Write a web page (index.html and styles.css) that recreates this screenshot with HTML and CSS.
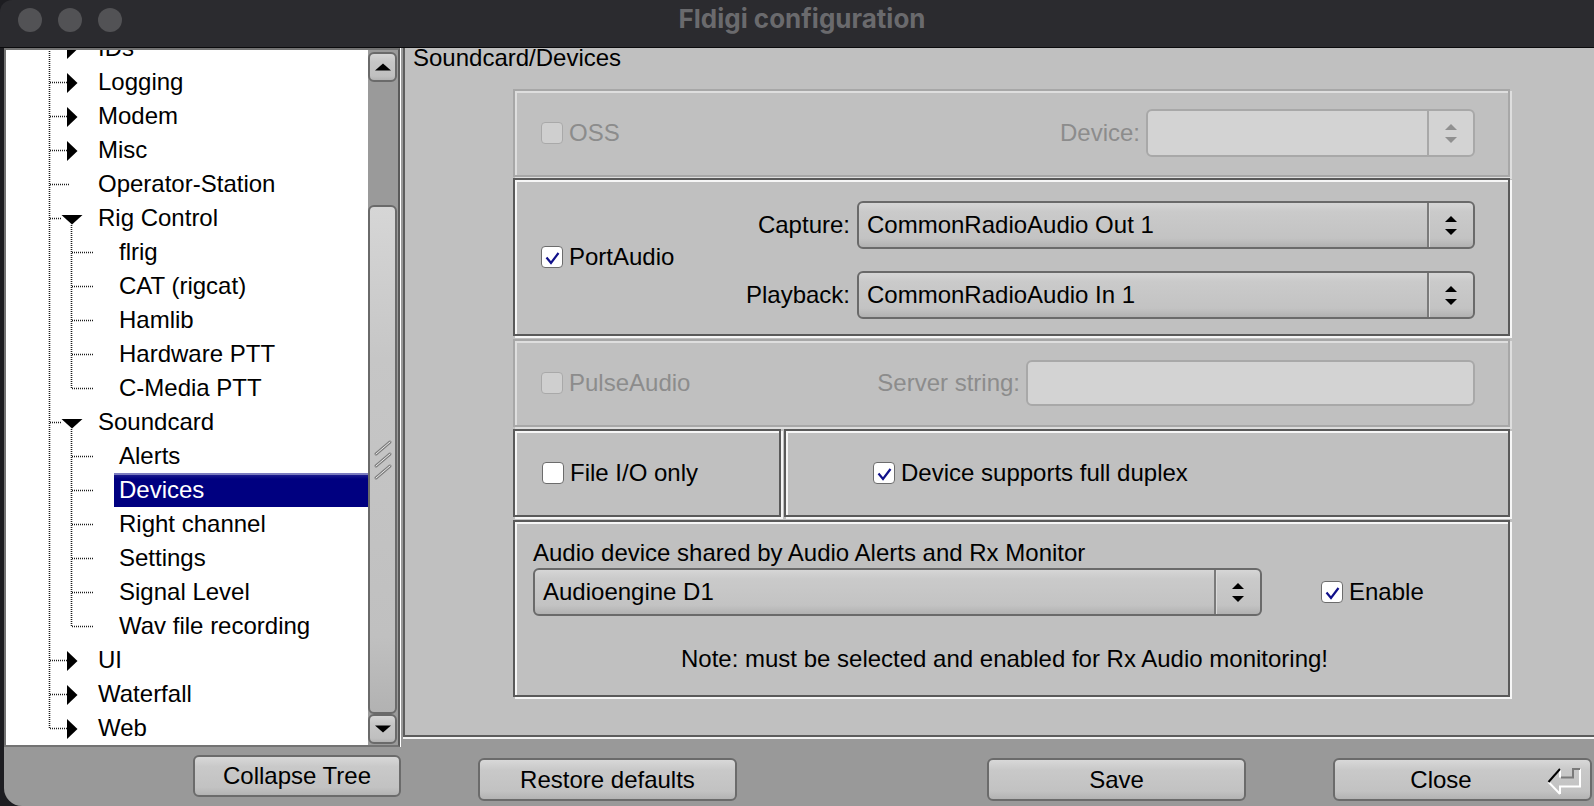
FILE: index.html
```html
<!DOCTYPE html>
<html lang="en">
<head>
    <meta charset="UTF-8">
    <title>Fldigi configuration</title>
    <link rel="stylesheet" href="styles.css">
</head>
<body>
<div class="window">
    <div class="titlebar">
        <div class="lights"><span></span><span></span><span></span></div>
        <div class="title">Fldigi configuration</div>
    </div>

    <div class="client">
        <!-- settings tree -->
        <div class="left-col">
            <div class="tree-box">
                <div class="tree-view">
                    <div class="tree-list">
                        <div class="node"><svg class="gut l1"><use href="#n-closed"/></svg><span class="lbl">IDs</span></div>
                        <div class="node"><svg class="gut l1"><use href="#n-closed"/></svg><span class="lbl">Logging</span></div>
                        <div class="node"><svg class="gut l1"><use href="#n-closed"/></svg><span class="lbl">Modem</span></div>
                        <div class="node"><svg class="gut l1"><use href="#n-closed"/></svg><span class="lbl">Misc</span></div>
                        <div class="node"><svg class="gut l1"><use href="#n-leaf"/></svg><span class="lbl">Operator-Station</span></div>
                        <div class="node"><svg class="gut l1"><use href="#n-open"/></svg><span class="lbl">Rig Control</span></div>
                        <div class="node"><svg class="gut l2"><use href="#c-mid"/></svg><span class="lbl">flrig</span></div>
                        <div class="node"><svg class="gut l2"><use href="#c-mid"/></svg><span class="lbl">CAT (rigcat)</span></div>
                        <div class="node"><svg class="gut l2"><use href="#c-mid"/></svg><span class="lbl">Hamlib</span></div>
                        <div class="node"><svg class="gut l2"><use href="#c-mid"/></svg><span class="lbl">Hardware PTT</span></div>
                        <div class="node"><svg class="gut l2"><use href="#c-last"/></svg><span class="lbl">C-Media PTT</span></div>
                        <div class="node"><svg class="gut l1"><use href="#n-open"/></svg><span class="lbl">Soundcard</span></div>
                        <div class="node"><svg class="gut l2"><use href="#c-mid"/></svg><span class="lbl">Alerts</span></div>
                        <div class="node sel"><svg class="gut l2"><use href="#c-mid"/></svg><span class="lbl">Devices</span></div>
                        <div class="node"><svg class="gut l2"><use href="#c-mid"/></svg><span class="lbl">Right channel</span></div>
                        <div class="node"><svg class="gut l2"><use href="#c-mid"/></svg><span class="lbl">Settings</span></div>
                        <div class="node"><svg class="gut l2"><use href="#c-mid"/></svg><span class="lbl">Signal Level</span></div>
                        <div class="node"><svg class="gut l2"><use href="#c-last"/></svg><span class="lbl">Wav file recording</span></div>
                        <div class="node"><svg class="gut l1"><use href="#n-closed"/></svg><span class="lbl">UI</span></div>
                        <div class="node"><svg class="gut l1"><use href="#n-closed"/></svg><span class="lbl">Waterfall</span></div>
                        <div class="node"><svg class="gut l1"><use href="#n-last"/></svg><span class="lbl">Web</span></div>
                    </div>
                </div>
                <div class="scrollbar">
                    <div class="sb-btn">
                        <svg width="16" height="8" viewBox="0 0 16 8"><polygon points="0,7.5 16,7.5 8,0.5" fill="#000"/></svg>
                    </div>
                    <div class="sb-thumb">
                        <svg width="20" height="42" viewBox="0 0 20 42">
                            <g stroke="#7e7e7e" stroke-width="3" stroke-linecap="round">
                                <line x1="3" y1="15" x2="17" y2="3"/>
                                <line x1="3" y1="27" x2="17" y2="15"/>
                                <line x1="3" y1="39" x2="17" y2="27"/>
                            </g>
                            <g stroke="#ececec" stroke-width="1" stroke-linecap="round">
                                <line x1="3" y1="15" x2="17" y2="3"/>
                                <line x1="3" y1="27" x2="17" y2="15"/>
                                <line x1="3" y1="39" x2="17" y2="27"/>
                            </g>
                        </svg>
                    </div>
                    <div class="sb-btn">
                        <svg width="16" height="8" viewBox="0 0 16 8"><polygon points="0,0.5 16,0.5 8,7.5" fill="#000"/></svg>
                    </div>
                </div>
            </div>
            <div class="left-buttons">
                <button class="btn collapse">Collapse Tree</button>
            </div>
        </div>

        <!-- Soundcard/Devices page -->
        <div class="right-col">
            <div class="panel">
                <div class="panel-title">Soundcard/Devices</div>
                <div class="groups">
                    <div class="group inactive oss">
                        <label class="cbx off"><span class="cb"></span>OSS</label>
                        <div class="field">
                            <span class="field-label">Device:</span>
                            <div class="choice disabled w-oss">
                                <span class="choice-text"></span>
                                <span class="choice-arrows"><svg width="12" height="19" viewBox="0 0 12 19"><polygon points="0,6 12,6 6,0"/><polygon points="0,13 12,13 6,19"/></svg></span>
                            </div>
                        </div>
                    </div>

                    <div class="group portaudio">
                        <label class="cbx"><span class="cb"><svg viewBox="0 0 22 22"><polyline points="5.5,11.5 10,17 17.5,7"/></svg></span>PortAudio</label>
                        <div class="pa-grid">
                            <span class="field-label">Capture:</span>
                            <div class="choice">
                                <span class="choice-text">CommonRadioAudio Out 1</span>
                                <span class="choice-arrows"><svg width="12" height="19" viewBox="0 0 12 19"><polygon points="0,6 12,6 6,0"/><polygon points="0,13 12,13 6,19"/></svg></span>
                            </div>
                            <span class="field-label">Playback:</span>
                            <div class="choice">
                                <span class="choice-text">CommonRadioAudio In 1</span>
                                <span class="choice-arrows"><svg width="12" height="19" viewBox="0 0 12 19"><polygon points="0,6 12,6 6,0"/><polygon points="0,13 12,13 6,19"/></svg></span>
                            </div>
                        </div>
                    </div>

                    <div class="group inactive pulse">
                        <label class="cbx off"><span class="cb"></span>PulseAudio</label>
                        <div class="field">
                            <span class="field-label">Server string:</span>
                            <div class="input disabled"></div>
                        </div>
                    </div>

                    <div class="fileio-row">
                        <div class="group fileio">
                            <label class="cbx"><span class="cb"></span>File I/O only</label>
                        </div>
                        <div class="group duplex">
                            <label class="cbx"><span class="cb"><svg viewBox="0 0 22 22"><polyline points="5.5,11.5 10,17 17.5,7"/></svg></span>Device supports full duplex</label>
                        </div>
                    </div>

                    <div class="group audio">
                        <div class="audio-label">Audio device shared by Audio Alerts and Rx Monitor</div>
                        <div class="audio-line">
                            <div class="choice w-audio">
                                <span class="choice-text">Audioengine D1</span>
                                <span class="choice-arrows"><svg width="12" height="19" viewBox="0 0 12 19"><polygon points="0,6 12,6 6,0"/><polygon points="0,13 12,13 6,19"/></svg></span>
                            </div>
                            <label class="cbx enable"><span class="cb"><svg viewBox="0 0 22 22"><polyline points="5.5,11.5 10,17 17.5,7"/></svg></span>Enable</label>
                        </div>
                        <div class="note">Note: must be selected and enabled for Rx Audio monitoring!</div>
                    </div>
                </div>
            </div>

            <div class="button-row">
                <button class="btn restore">Restore defaults</button>
                <button class="btn save">Save</button>
                <button class="btn close">
                    <span class="btn-text">Close</span>
                    <svg class="ret" width="34" height="30" viewBox="0 0 34 30">
                        <g fill="none" stroke-width="2">
                            <path d="M1.5 17 L13 29" stroke="#fff"/>
                            <path d="M13 29 V21.5 H33 V4" stroke="#fff"/>
                            <path d="M13 12.5 V4" stroke="#fff"/>
                            <path d="M1.5 17 L13 4" stroke="#000"/>
                            <path d="M14 12.5 H26 V4 H33" stroke="#7a7a7a"/>
                        </g>
                    </svg>
                </button>
            </div>
        </div>
    </div>
</div>

<!-- tree connector pieces, one per row type -->
<svg class="defs" width="0" height="0">
    <symbol id="n-closed">
        <g stroke="#1c1c1c" stroke-width="1.6" stroke-dasharray="1 1">
            <line x1="43.5" y1="0" x2="43.5" y2="34"/>
            <line x1="44" y1="17.5" x2="61" y2="17.5"/>
        </g>
        <polygon points="61,8 71.5,18 61,28" fill="#000"/>
    </symbol>
    <symbol id="n-last">
        <g stroke="#1c1c1c" stroke-width="1.6" stroke-dasharray="1 1">
            <line x1="43.5" y1="0" x2="43.5" y2="18"/>
            <line x1="44" y1="17.5" x2="61" y2="17.5"/>
        </g>
        <polygon points="61,8 71.5,18 61,28" fill="#000"/>
    </symbol>
    <symbol id="n-leaf">
        <g stroke="#1c1c1c" stroke-width="1.6" stroke-dasharray="1 1">
            <line x1="43.5" y1="0" x2="43.5" y2="34"/>
            <line x1="44" y1="17.5" x2="64" y2="17.5"/>
        </g>
    </symbol>
    <symbol id="n-open">
        <g stroke="#1c1c1c" stroke-width="1.6" stroke-dasharray="1 1">
            <line x1="43.5" y1="0" x2="43.5" y2="34"/>
            <line x1="44" y1="17.5" x2="56" y2="17.5"/>
            <line x1="65.5" y1="24" x2="65.5" y2="34"/>
        </g>
        <polygon points="55.5,14 76.5,14 66,23.5" fill="#000"/>
    </symbol>
    <symbol id="c-mid">
        <g stroke="#1c1c1c" stroke-width="1.6" stroke-dasharray="1 1">
            <line x1="43.5" y1="0" x2="43.5" y2="34"/>
            <line x1="65.5" y1="0" x2="65.5" y2="34"/>
            <line x1="66" y1="17.5" x2="88" y2="17.5"/>
        </g>
    </symbol>
    <symbol id="c-last">
        <g stroke="#1c1c1c" stroke-width="1.6" stroke-dasharray="1 1">
            <line x1="43.5" y1="0" x2="43.5" y2="34"/>
            <line x1="65.5" y1="0" x2="65.5" y2="18"/>
            <line x1="66" y1="17.5" x2="88" y2="17.5"/>
        </g>
    </symbol>
</svg>
</body>
</html>
```

FILE: styles.css
```css
/* Fldigi configuration dialog */
* {
    box-sizing: border-box;
}

body {
    margin: 0;
    background-color: #1d1d21;
    font-family: "Liberation Sans", Arial, sans-serif;
    font-size: 24px;
    color: #000;
    overflow: hidden;
}

.window {
    width: 1594px;
    height: 806px;
    display: flex;
    flex-direction: column;
}

/* title bar */
.titlebar {
    height: 48px;
    flex: none;
    background-color: #2b2b2f;
    border-bottom: 1px solid #0b0b0d;
    border-top-left-radius: 12px;
    display: grid;
    grid-template-columns: 1fr auto 1fr;
    align-items: start;
}

.lights {
    display: flex;
    gap: 16px;
    padding-left: 18px;
    margin-top: 8px;
}

.lights span {
    width: 24px;
    height: 24px;
    border-radius: 50%;
    background-color: #525255;
}

.title {
    font-family: Inter, "Liberation Sans", sans-serif;
    font-weight: 700;
    font-size: 26px;
    line-height: 30px;
    margin-top: 4px;
    padding-left: 10px;
    color: #6a6a6d;
}

.client {
    flex: 1;
    display: flex;
    margin-left: 4px;
    background-color: #999;
    border-bottom-left-radius: 18px;
}

/* left: tree */
.left-col {
    width: 398px;
    flex: none;
    display: flex;
    flex-direction: column;
}

.tree-box {
    width: 396px;
    height: 699px;
    display: flex;
    border: 2px solid #737373;
    border-right-color: #5a5a5a;
    box-shadow: 1px 0 0 #fff;
    background-color: #fff;
}

.tree-view {
    flex: 1;
    overflow: hidden;
}

.tree-list {
    margin-top: -19px;
}

.node {
    height: 34px;
    display: flex;
    line-height: 34px;
    white-space: nowrap;
}

.gut {
    display: block;
    flex: none;
    height: 34px;
}

.gut.l1 {
    width: 87px;
}

.gut.l2 {
    width: 108px;
}

.lbl {
    flex: 1;
    padding-left: 5px;
}

.node.sel .lbl {
    background: linear-gradient(#7c7cc0 0, #7c7cc0 2px, #1a1a8c 2px, #000080 6px, #000080 100%);
    color: #fff;
}

.defs {
    display: block;
    overflow: hidden;
}

/* scrollbar */
.scrollbar {
    width: 30px;
    flex: none;
    background-color: #9a9a9a;
    display: flex;
    flex-direction: column;
    padding: 2px 1px 1px 0;
}

.sb-btn,
.sb-thumb {
    border: 2px solid #6a6a6a;
    border-radius: 6px;
    background: linear-gradient(#d6d6d6, #c6c6c6 30%, #c0c0c0 85%, #b2b2b2);
    display: flex;
    align-items: center;
    justify-content: center;
    flex: none;
}

.sb-btn {
    height: 30px;
}

.sb-thumb {
    height: 509px;
    margin-top: 123px;
}

.left-buttons {
    padding: 8px 0 0 189px;
}

/* buttons */
.btn {
    font-family: "Liberation Sans", Arial, sans-serif;
    font-size: 24px;
    color: #000;
    border: 2px solid #6b6b6b;
    border-radius: 6px;
    background: linear-gradient(#d8d8d8, #c9c9c9 25%, #c2c2c2 80%, #b3b3b3);
    padding: 0;
    margin: 0;
    flex: none;
}

.btn.collapse {
    width: 208px;
    height: 42px;
}

/* right: settings page */
.right-col {
    width: 1192px;
    flex: none;
    display: flex;
    flex-direction: column;
}

.panel {
    height: 689px;
    flex: none;
    margin-left: 1px;
    background-color: #c0c0c0;
    border-left: 2px solid #5c5c5c;
    border-bottom: 2px solid #5c5c5c;
    box-shadow: 0 2px 0 #f2f2f2;
}

.panel-title {
    line-height: 18px;
    padding-left: 8px;
    padding-top: 1px;
}

.groups {
    margin: 22px 0 0 108px;
    width: 997px;
    line-height: 28px;
}

.group {
    border: 2px solid #5a5a5a;
    box-shadow: inset 2px 2px 0 #f6f6f6, 2px 2px 0 #f6f6f6;
    display: flex;
    align-items: center;
}

.group.inactive {
    border-color: #a7a7a7;
    box-shadow: inset 2px 2px 0 #dedede, 2px 2px 0 #dedede;
    color: #8c8c8c;
}

.oss {
    height: 88px;
    padding: 0 33px 0 26px;
}

.portaudio {
    height: 158px;
    margin-top: 1px;
    padding: 0 33px 0 26px;
}

.pulse {
    height: 88px;
    margin-top: 3px;
    padding: 0 33px 0 26px;
}

.fileio-row {
    display: flex;
    gap: 3px;
    margin-top: 2px;
}

.fileio {
    width: 268px;
    height: 88px;
    padding-left: 27px;
}

.duplex {
    flex: 1;
    height: 88px;
    padding-left: 87px;
}

.audio {
    height: 177px;
    margin-top: 3px;
    display: block;
    padding: 17px 0 0 18px;
}

/* check buttons */
.cbx {
    display: flex;
    align-items: center;
    gap: 6px;
    white-space: nowrap;
}

.cb {
    width: 22px;
    height: 22px;
    flex: none;
    border: 1.5px solid #6c6c6c;
    border-radius: 4px;
    background-color: #fff;
    display: flex;
}

.cb svg {
    margin: -1.5px;
    width: 22px;
    height: 22px;
    fill: none;
    stroke: #10108a;
    stroke-width: 2.2;
}

.cbx.off .cb {
    background-color: #cfcfcf;
    border-color: #a9a9a9;
}

/* labelled fields */
.field {
    margin-left: auto;
    display: flex;
    align-items: center;
    gap: 6px;
}

.pa-grid {
    margin-left: auto;
    margin-top: 6px;
    display: grid;
    grid-template-columns: auto 618px;
    column-gap: 7px;
    row-gap: 22px;
    align-items: center;
}

.field-label {
    text-align: right;
    white-space: nowrap;
}

/* drop-down choices */
.choice {
    height: 48px;
    display: flex;
    border: 2px solid #6a6a6a;
    border-radius: 6px;
    background: linear-gradient(#d6d6d6, #cacaca 20%, #c3c3c3 80%, #b1b1b1);
}

.choice-text {
    flex: 1;
    padding-left: 8px;
    line-height: 44px;
    white-space: nowrap;
}

.choice-arrows {
    width: 46px;
    flex: none;
    border-left: 2px solid #7a7a7a;
    box-shadow: inset 1px 0 0 #dadada;
    display: flex;
    align-items: center;
    justify-content: center;
    fill: #000;
}

.w-oss {
    width: 329px;
}

.w-audio {
    width: 729px;
}

.choice.disabled,
.input.disabled {
    border-color: #a8a8a8;
    background: #d3d3d3;
}

.choice.disabled .choice-arrows {
    border-left-color: #a8a8a8;
    box-shadow: none;
    fill: #909090;
}

.input {
    width: 449px;
    height: 46px;
    border: 2px solid #a8a8a8;
    border-radius: 6px;
}

/* shared audio device */
.audio-line {
    display: flex;
    align-items: center;
    margin-top: 1px;
}

.cbx.enable {
    margin-left: 59px;
}

.note {
    margin-top: 29px;
    padding-right: 32px;
    text-align: center;
}

/* bottom buttons */
.button-row {
    display: flex;
    padding-top: 21px;
}

.button-row .btn {
    width: 259px;
    height: 43px;
}

.btn.restore {
    margin-left: 76px;
}

.btn.save {
    margin-left: 250px;
}

.btn.close {
    margin-left: 87px;
    display: flex;
    align-items: center;
    padding-right: 9px;
}

.btn-text {
    flex: 1;
    text-align: center;
}

.ret {
    flex: none;
}
```
